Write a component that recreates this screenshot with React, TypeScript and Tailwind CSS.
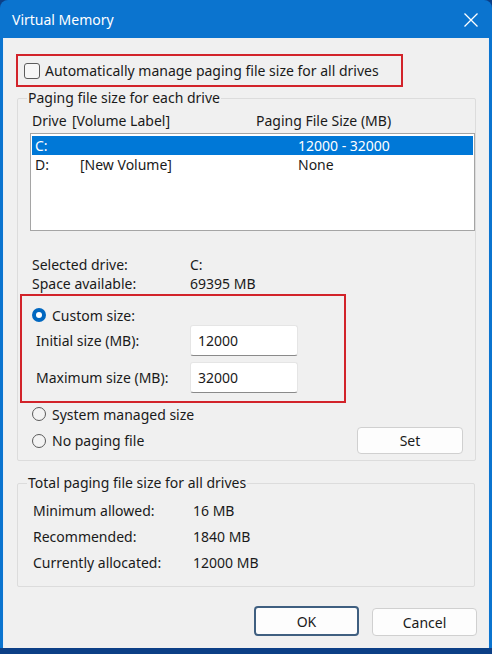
import React from "react";

const Radio = ({ checked }: { checked?: boolean }) =>
  checked ? (
    <span className="w-[14px] h-[14px] rounded-full bg-[#0067c0] flex items-center justify-center shrink-0">
      <span className="w-[6px] h-[6px] rounded-full bg-white" />
    </span>
  ) : (
    <span className="w-[14px] h-[14px] rounded-full border border-[#5a5a5a] bg-[#f3f3f3] shrink-0" />
  );

const SizeInput = ({ value }: { value: string }) => (
  <div className="w-[108px] h-[31px] bg-white border border-[#e5e5e5] border-b-[#8a8a8a] rounded-[3px] flex items-center pl-[7px] text-[#1a1a1a]">
    {value}
  </div>
);

const App = () => {
  return (
    <div
      className="w-[492px] h-[654px] bg-[#0c3f86] text-[14px] text-[#1a1a1a] overflow-hidden"
      style={{ fontFamily: '"Noto Sans", "Liberation Sans", sans-serif' }}
    >
      {/* Window */}
      <div className="h-[648px] bg-[#0b74cf] rounded-t-[8px] px-[3px] flex flex-col">
        {/* Title bar */}
        <div className="h-[38px] flex items-center justify-between pl-[9px] pr-[10px] text-white">
          <span className="text-[14px]">Virtual Memory</span>
          <svg width="16" height="16" viewBox="0 0 16 16" className="mt-[2px]">
            <path d="M1.5 1.5 L14.5 14.5 M14.5 1.5 L1.5 14.5" stroke="white" strokeWidth="1.3" />
          </svg>
        </div>

        {/* Body */}
        <div className="flex-1 bg-[#f0f0f0] flex flex-col border-l border-r border-[#e8eef5]">
          {/* Automatic checkbox (highlighted) */}
          <div className="mt-[16px] ml-[12px] w-[387px] h-[33px] border-2 border-[#d2232a] flex items-center pl-[6px] gap-[5px]">
            <span className="w-[16px] h-[16px] rounded-[3px] border border-[#5c5c5c] bg-[#f7f7f7] shrink-0" />
            <span>Automatically manage paging file size for all drives</span>
          </div>

          {/* Paging file size for each drive */}
          <fieldset className="mt-[1px] ml-[13px] w-[459px] border border-[#dcdcdc] rounded-[2px]">
            <legend className="ml-[9px] px-[1px] leading-[20px]">Paging file size for each drive</legend>

            <div className="mt-[2px] h-[20px] flex items-center">
              <span className="pl-[14px] w-[54px]">Drive</span>
              <span className="w-[184px]">[Volume Label]</span>
              <span>Paging File Size (MB)</span>
            </div>

            <div className="mt-[3px] ml-[12px] w-[445px] h-[98px] bg-white border border-[#a5a5a5] pt-[2px] pl-[1px]">
              <div className="w-[441px] h-[19px] bg-[#0078d7] text-white flex items-center">
                <span className="pl-[3px] w-[266px]">C:</span>
                <span>12000 - 32000</span>
              </div>
              <div className="w-[441px] h-[19px] flex items-center">
                <span className="pl-[3px] w-[48px]">D:</span>
                <span className="w-[218px]">[New Volume]</span>
                <span>None</span>
              </div>
            </div>

            <div className="mt-[24px] leading-[19px]">
              <div className="flex">
                <span className="pl-[14px] w-[172px]">Selected drive:</span>
                <span>C:</span>
              </div>
              <div className="flex">
                <span className="pl-[14px] w-[172px]">Space available:</span>
                <span>69395 MB</span>
              </div>
            </div>

            {/* Custom size (highlighted) */}
            <div className="mt-[1px] ml-[2px] w-[326px] h-[109px] border-2 border-[#d2232a]">
              <div className="mt-[9px] h-[20px] pl-[10px] flex items-center gap-[6px]">
                <Radio checked />
                <span>Custom size:</span>
              </div>
              <div className="flex items-center">
                <span className="pl-[14px] w-[168px]">Initial size (MB):</span>
                <SizeInput value="12000" />
              </div>
              <div className="mt-[6px] flex items-center">
                <span className="pl-[14px] w-[168px]">Maximum size (MB):</span>
                <SizeInput value="32000" />
              </div>
            </div>

            <div className="mt-[1px] h-[20px] pl-[14px] flex items-center gap-[6px]">
              <Radio />
              <span>System managed size</span>
            </div>

            <div className="mt-[3px] mb-[6px] h-[27px] pl-[14px] flex items-center gap-[6px]">
              <Radio />
              <span>No paging file</span>
              <button className="ml-auto mr-[12px] w-[106px] h-[27px] bg-[#fdfdfd] border border-[#d0d0d0] rounded-[4px]">
                Set
              </button>
            </div>
          </fieldset>

          {/* Totals */}
          <fieldset className="mt-[12px] ml-[13px] w-[458px] border border-[#dcdcdc] rounded-[2px]">
            <legend className="ml-[9px] px-[1px] leading-[20px]">Total paging file size for all drives</legend>
            <div className="pt-[4px] pb-[11px]">
              {[
                ["Minimum allowed:", "16 MB"],
                ["Recommended:", "1840 MB"],
                ["Currently allocated:", "12000 MB"],
              ].map(([label, value]) => (
                <div key={label} className="h-[26px] flex items-center">
                  <span className="pl-[15px] w-[175px]">{label}</span>
                  <span>{value}</span>
                </div>
              ))}
            </div>
          </fieldset>

          {/* Dialog buttons */}
          <div className="mt-[19px] mr-[11px] flex justify-end items-end gap-[13px]">
            <button className="w-[105px] h-[30px] bg-[#fdfdfd] border-2 border-[#3f5f80] rounded-[4px]">OK</button>
            <button className="w-[105px] h-[28px] bg-[#fdfdfd] border border-[#d0d0d0] rounded-[4px]">Cancel</button>
          </div>
        </div>
      </div>
    </div>
  );
};

export default App;
